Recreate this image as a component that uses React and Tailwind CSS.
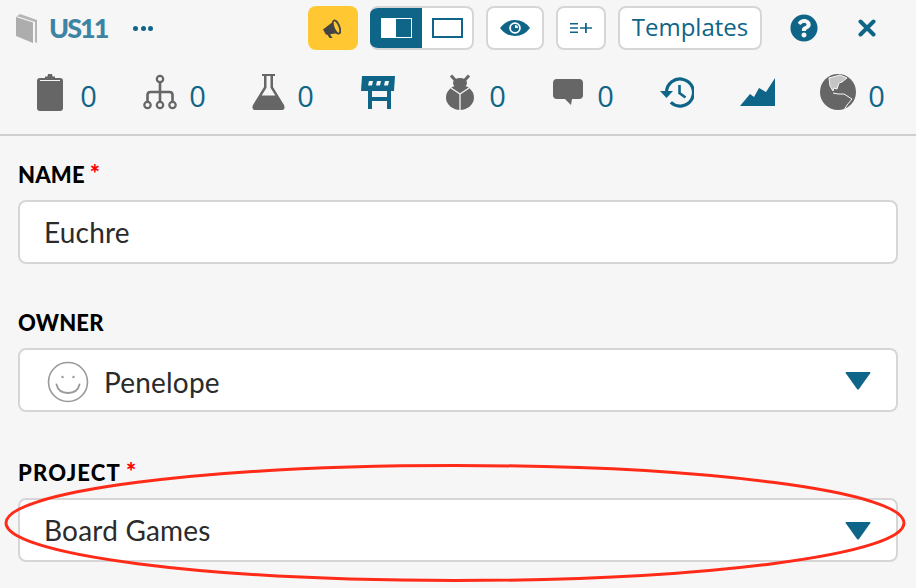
import { FaQuestionCircle } from "react-icons/fa";

const BLUE = "#0f6588";
const GRAY = "#666666";

function Clipboard() {
  return (
    <svg width="26" height="37" viewBox="0 0 26 37">
      <path d="M3 4h5V2.500h2.500L11 0h4l.5 2.500H18V4h5q3 0 3 3v27q0 3-3 3H3q-3 0-3-3V7q0-3 3-3z" fill={GRAY} />
      <path d="M3 6.500h20" stroke="#f6f6f6" strokeWidth="1" />
    </svg>
  );
}

function Tree() {
  return (
    <svg width="34" height="36" viewBox="0 0 34 36" fill="none" stroke={GRAY} strokeWidth="2.200">
      <circle cx="17" cy="5" r="3.200" />
      <circle cx="4.500" cy="31" r="3.200" />
      <circle cx="17" cy="31" r="3.200" />
      <circle cx="29.500" cy="31" r="3.200" />
      <path d="M17 8v19.500M4.500 27.500V21q0-3 3-3h19q3 0 3 3v6.500" strokeWidth="2.600" />
    </svg>
  );
}

function Flask() {
  return (
    <svg width="33" height="36" viewBox="0 0 33 36">
      <path d="M10 0h13v2h-2v11l11 18q2 5-3 5H4q-5 0-3-5l11-18V2h-2z" fill={GRAY} />
      <path d="M14.500 2v11.800L9.700 21.500h13.600L18.500 13.800V2z" fill="#f6f6f6" />
    </svg>
  );
}

function Store() {
  return (
    <svg width="34" height="33" viewBox="0 0 34 33">
      <path d="M1 0h33l-1 15H0z" fill={BLUE} />
      <path d="M7 15h4v18H7zM26 15h4v18h-4zM11 21h15v4H11z" fill={BLUE} />
      <path d="M8 5h4l-1 4.500H7zM16 5h4l-1 4.500h-4zM24 5h4l-1 4.500h-4z" fill="#f6f6f6" />
    </svg>
  );
}

function Bug() {
  return (
    <svg width="28" height="36" viewBox="0 0 28 36">
      <path d="M5 1.500l5 5.500M23 1.500l-5 5.500" stroke={GRAY} strokeWidth="3" />
      <ellipse cx="14" cy="9" rx="7" ry="5" fill={GRAY} />
      <ellipse cx="14" cy="23.500" rx="14" ry="12.500" fill={GRAY} />
      <path d="M5 14l9 6 9-6M14 20v16" fill="none" stroke="#f6f6f6" strokeWidth="1.300" />
    </svg>
  );
}

function Comment() {
  return (
    <svg width="30" height="26" viewBox="0 0 30 26">
      <path d="M4 0h22q4 0 4 4v12q0 4-4 4h-7l-1 6-6-6H4q-4 0-4-4V4q0-4 4-4z" fill={GRAY} />
    </svg>
  );
}

function History() {
  return (
    <svg width="34" height="31" viewBox="0 0 34 31" fill="none">
      <path d="M6.500 15.500a13.500 13.500 0 1 1 4.300 9.900" stroke={BLUE} strokeWidth="3.200" />
      <path d="M0 14h13l-6.500 7z" fill={BLUE} />
      <path d="M19.500 8v8l6 4.500" stroke={BLUE} strokeWidth="2.600" />
    </svg>
  );
}

function Chart() {
  return (
    <svg width="35" height="28" viewBox="0 0 35 28">
      <path d="M0 28L10 16l4 3 5-9 7 4 9-14v28z" fill={BLUE} />
    </svg>
  );
}

function Globe() {
  return (
    <svg width="36" height="36" viewBox="0 0 36 36">
      <circle cx="18" cy="18" r="18" fill={GRAY} />
      <path d="M9 4L20 1l7 3-5 4-3 1-2 6-3-1-1 3-3-5z" fill="#c4c4c4" stroke="#f6f6f6" strokeWidth="1" />
      <path d="M13 19l5 1 6 0 8 5-5 6-3 5" fill="none" stroke="#f6f6f6" strokeWidth="1" />
    </svg>
  );
}

function Horn() {
  return (
    <svg width="19" height="19" viewBox="0 0 19 19" className="mr-[4px]">
      <path d="M1 10.500L12 2l5 12-11 1.500-2 .2z" fill="#444444" />
      <path d="M5 15l2.500 4h3L8 15z" fill="#444444" />
      <ellipse cx="14.500" cy="8" rx="2.800" ry="7" transform="rotate(-22 14.500 8)" fill="#ffc832" stroke="#444444" strokeWidth="1.800" />
    </svg>
  );
}

function Eye() {
  return (
    <svg width="30" height="16" viewBox="0 0 30 16">
      <path d="M0 8Q6 0 15 0t15 8q-6 8-15 8T0 8z" fill={BLUE} />
      <circle cx="15" cy="8" r="5.800" fill="#fff" />
      <circle cx="15" cy="8" r="4" fill={BLUE} />
      <path d="M15 8V5a3 3 0 0 1 3 3z" fill="#fff" />
    </svg>
  );
}

function Caret() {
  return (
    <svg width="26" height="18" viewBox="0 0 26 18" className="mt-[2px]">
      <path d="M1.500 0h23q1.500 0 .7 1.300L14 17q-1 1-2 0L.8 1.300Q0 0 1.500 0z" fill={BLUE} />
    </svg>
  );
}

function Smile() {
  return (
    <svg width="42" height="42" viewBox="0 0 42 42" fill="none" stroke="#999999">
      <circle cx="21" cy="21" r="19.500" strokeWidth="1.600" />
      <circle cx="15.500" cy="16" r="1" fill="#999999" strokeWidth="0.500" />
      <circle cx="26.500" cy="16" r="1" fill="#999999" strokeWidth="0.500" />
      <path d="M9.500 23.500q2 8.500 11.500 8.500t11.500-8.500" strokeWidth="1.800" strokeLinecap="round" />
    </svg>
  );
}

function Count({ children }) {
  return (
    <span className="w-[15px] pt-[6px] flex justify-center font-['Open_Sans',sans-serif] text-[29px] leading-none text-[#0f6588]">{children}</span>
  );
}

function Label({ text, required, wide }) {
  return (
    <div className={`h-[26px] mb-[13px] flex items-center font-['Lato',sans-serif] font-black text-[22px] text-black ${wide ? "tracking-[1.2px]" : "tracking-[0.2px]"}`}>
      {text}
      {required && <span className="ml-[5px] text-[#f00] text-[24px]">*</span>}
    </div>
  );
}

function Field({ children, caret }) {
  return (
    <div className="h-[64px] bg-white border-2 border-[#d6d6d6] rounded-[8px] flex items-center pl-[24px] pr-[25px] font-['Lato',sans-serif] text-[28px] tracking-[0.2px] text-[#2b2b2b]">
      <div className="flex-1 flex items-center">{children}</div>
      {caret && <Caret />}
    </div>
  );
}

export default function App() {
  return (
    <div className="relative w-[916px] h-[588px] bg-[#f6f6f6] overflow-hidden">
      <div className="h-[136px] pt-[6px] border-b-2 border-[#cfcfcf]">
        <div className="flex items-center h-[44px] pl-[16px]">
          <svg width="21" height="29" viewBox="0 0 21 29">
            <path d="M0 3l4-3 17 6v23l-2-1V8L2 2.500z" fill="#b5b5b5" />
            <path d="M0 3l17 5.500V29L0 22z" fill="#adadad" />
          </svg>
          <span className="ml-[12px] w-[58px] pt-[1px] font-['Lato',sans-serif] font-black text-[27px] tracking-[-2px] text-[#3d84a3]">US11</span>
          <span className="ml-[26px] w-[20px] flex justify-between">
            <i className="block w-[5px] h-[5px] rounded-full bg-[#0f6588]" />
            <i className="block w-[5px] h-[5px] rounded-full bg-[#0f6588]" />
            <i className="block w-[5px] h-[5px] rounded-full bg-[#0f6588]" />
          </span>
          <button className="ml-[155px] w-[50px] h-[44px] rounded-[8px] bg-[#ffc832] flex items-center justify-center">
            <Horn />
          </button>
          <div className="ml-[12px] flex h-[44px] w-[104px] rounded-[8px] overflow-hidden border-2 border-[#d6d6d6] border-l-0 bg-white">
            <div className="w-[52px] h-[44px] -mt-[2px] bg-[#0f6588] flex items-center justify-center">
              <div className="w-[31px] h-[20px] border border-white bg-white flex justify-end">
                <div className="w-[15px] bg-[#0f6588]" />
              </div>
            </div>
            <div className="flex-1 flex items-center justify-center">
              <div className="w-[31px] h-[20px] border-2 border-[#0f6588]" />
            </div>
          </div>
          <button className="ml-[12px] w-[58px] h-[44px] rounded-[8px] bg-white border-2 border-[#d6d6d6] flex items-center justify-center">
            <Eye />
          </button>
          <button className="ml-[12px] w-[50px] h-[44px] rounded-[8px] bg-white border-2 border-[#d6d6d6] flex items-center justify-center gap-[3px]">
            <svg width="22" height="12" viewBox="0 0 22 12" fill={BLUE}>
              <path d="M0 1h8v1.500H0zM0 5.200h8v1.500H0zM0 9.500h8V11H0zM15 1h1.800v4.200H22v1.600h-5.200V11H15V6.800h-5V5.200h5z" />
            </svg>
          </button>
          <button className="ml-[12px] w-[144px] h-[44px] pb-[2px] rounded-[8px] bg-white border-2 border-[#d6d6d6] font-['Open_Sans',sans-serif] text-[24px] leading-none text-[#0f6588]">
            Templates
          </button>
          <FaQuestionCircle size={28} color={BLUE} className="ml-[28px]" />
          <svg width="18" height="18" viewBox="0 0 18 18" className="ml-[40px]">
            <path d="M2.500 2.500l13 13M15.500 2.500l-13 13" stroke={BLUE} strokeWidth="4" strokeLinecap="round" />
          </svg>
        </div>
        <div className="flex items-center h-[40px] mt-[22px] pl-[37px]">
          <div className="flex items-center gap-[18px]"><Clipboard /><Count>0</Count></div>
          <div className="ml-[47px] flex items-center gap-[13px]"><Tree /><Count>0</Count></div>
          <div className="ml-[47px] flex items-center gap-[13px]"><Flask /><Count>0</Count></div>
          <div className="ml-[48px]"><Store /></div>
          <div className="ml-[51px] flex items-center gap-[16px]"><Bug /><Count>0</Count></div>
          <div className="ml-[48px] flex items-center gap-[15px]"><Comment /><Count>0</Count></div>
          <div className="ml-[47px]"><History /></div>
          <div className="ml-[46px]"><Chart /></div>
          <div className="ml-[45px] flex items-center gap-[13px]"><Globe /><Count>0</Count></div>
        </div>
      </div>

      <div className="px-[18px] pt-[25px]">
        <Label text="NAME" required />
        <div className="mb-[45px]"><Field>Euchre</Field></div>
        <Label text="OWNER" />
        <div className="mb-[47px]">
          <Field caret>
            <span className="mt-[3px] flex items-center">
              <span className="ml-[3px] mr-[15px] flex"><Smile /></span>
              Penelope
            </span>
          </Field>
        </div>
        <Label text="PROJECT" required wide />
        <Field caret>Board Games</Field>
      </div>

      <svg width="916" height="588" className="absolute left-0 top-0 pointer-events-none" fill="none">
        <ellipse cx="455" cy="523" rx="449" ry="57.500" stroke="#ff2a17" strokeWidth="3" />
      </svg>
    </div>
  );
}
